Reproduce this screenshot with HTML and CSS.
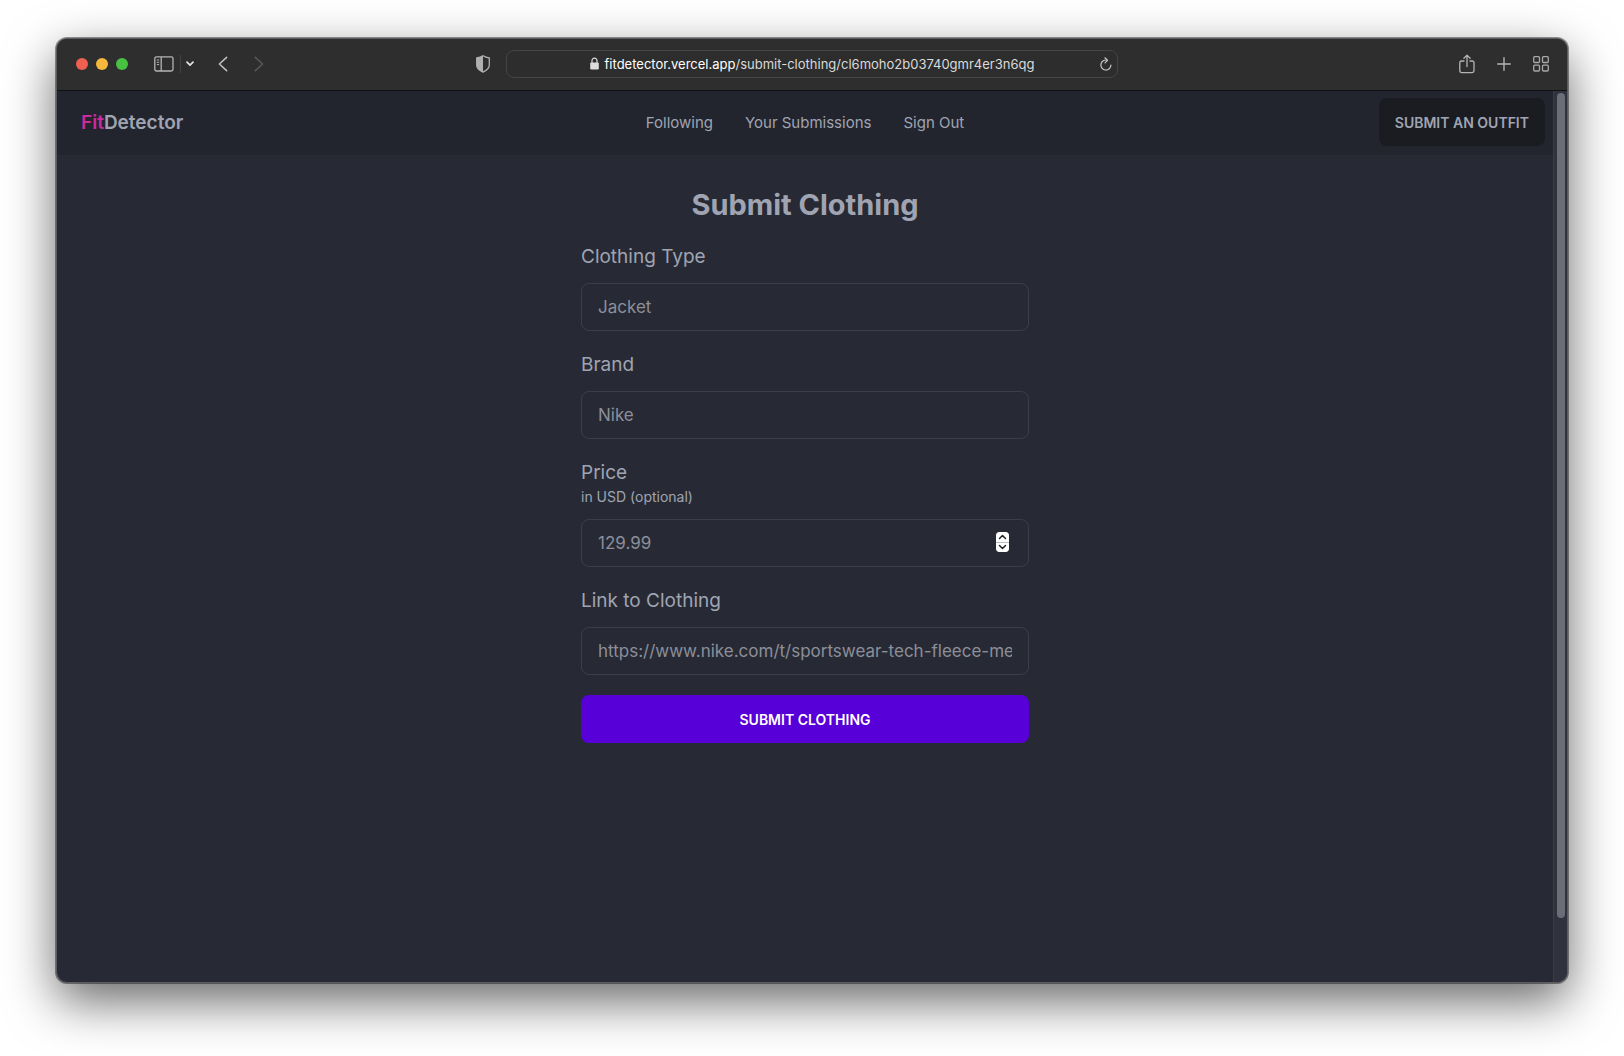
FILE: index.html
```html
<!DOCTYPE html>
<html lang="en">
<head>
<meta charset="utf-8">
<meta name="viewport" content="width=device-width, initial-scale=1">
<title>FitDetector</title>
<link rel="stylesheet" href="styles.css">
</head>
<body>
<div class="window">
  <header class="toolbar">
    <div class="toolbar-left">
      <div class="lights"><span class="light red"></span><span class="light yellow"></span><span class="light green"></span></div>
      <button class="tool sidebar" aria-label="Sidebar"><svg width="20" height="16" viewBox="0 0 20 16" fill="none" stroke="#b4b4b4" stroke-width="1.3"><rect x=".8" y=".8" width="18.2" height="14.2" rx="1.8"/><path d="M7.2 1v14"/><path d="M2.8 4h2.4M2.8 6.3h2.4M2.8 8.6h2.4" stroke-width="1"/></svg></button>
      <span class="divider"></span>
      <button class="tool chevron" aria-label="Tab groups"><svg width="8" height="6" viewBox="0 0 8 6" fill="none" stroke="#e2e2e2" stroke-width="1.7" stroke-linecap="round" stroke-linejoin="round"><path d="M1 1.2l3 3 3-3"/></svg></button>
      <button class="tool back" aria-label="Back"><svg width="10" height="16" viewBox="0 0 10 16" fill="none" stroke="#bdbdbd" stroke-width="1.6" stroke-linecap="round" stroke-linejoin="round"><path d="M8.6 1.3L1.4 8l7.2 6.7"/></svg></button>
      <button class="tool forward" aria-label="Forward"><svg width="10" height="16" viewBox="0 0 10 16" fill="none" stroke="#575757" stroke-width="1.6" stroke-linecap="round" stroke-linejoin="round"><path d="M1.4 1.3L8.6 8l-7.2 6.7"/></svg></button>
      <button class="tool shield" aria-label="Privacy report"><svg width="14" height="18" viewBox="0 0 14 18"><path d="M7 .8C5.200 2 3 2.700 .7 3v7.200c0 3 2.600 5 6.300 6.900 3.700-1.900 6.300-3.900 6.300-6.900V3C11 2.700 8.800 2 7 .8z" fill="none" stroke="#b0b0b0" stroke-width="1.300"/><path d="M7 .8C5.200 2 3 2.700 .7 3v7.200c0 3 2.600 5 6.300 6.900z" fill="#b0b0b0"/></svg></button>
    </div>
    <div class="address">
      <svg class="lock" width="9" height="13" viewBox="0 0 9 13"><rect x=".2" y="5.400" width="8.600" height="7" rx="1.200" fill="#dcdcdc"/><path d="M2 6V3.600a2.500 2.500 0 0 1 5 0V6" fill="none" stroke="#dcdcdc" stroke-width="1.200"/></svg>
      <span class="url"><span class="host">fitdetector.vercel.app</span>/submit-clothing/cl6moho2b03740gmr4er3n6qg</span>
      <button class="tool reload" aria-label="Reload"><svg width="12" height="14" viewBox="0 0 12 14" fill="none" stroke="#c4c4c4" stroke-width="1.200" stroke-linecap="round" stroke-linejoin="round"><path d="M7.200 3.200A5 5 0 1 0 10.900 8M4.900 .8l2.600 2.500-2.500 2.600"/></svg></button>
    </div>
    <div class="toolbar-right">
      <button class="tool" aria-label="Share"><svg width="16" height="20" viewBox="0 0 16 20" fill="none" stroke="#b4b4b4" stroke-width="1.300" stroke-linecap="round" stroke-linejoin="round"><path d="M5 7H2.600A1.800 1.800 0 0 0 .8 8.800v8a1.800 1.800 0 0 0 1.800 1.800h10.600a1.800 1.800 0 0 0 1.800-1.800v-8A1.800 1.800 0 0 0 13.200 7H11M8 12.500V1.200M4.900 4.200L8 1.100l3.100 3.100"/></svg></button>
      <button class="tool" aria-label="New tab"><svg width="14" height="14" viewBox="0 0 14 14" stroke="#b4b4b4" stroke-width="1.400" stroke-linecap="round"><path d="M7 .7v12.600M.7 7h12.600"/></svg></button>
      <button class="tool" aria-label="Tab overview"><svg width="16" height="16" viewBox="0 0 16 16" fill="none" stroke="#a8a8a8" stroke-width="1.300"><rect x=".7" y=".7" width="5.800" height="5.800" rx="1"/><rect x="9.500" y=".7" width="5.800" height="5.800" rx="1"/><rect x=".7" y="9.200" width="5.800" height="5.800" rx="1"/><rect x="9.500" y="9.200" width="5.800" height="5.800" rx="1"/></svg></button>
    </div>
  </header>
  <div class="viewport">
    <div class="page">
      <nav class="navbar">
        <a class="logo" href="#"><span class="accent">Fit</span>Detector</a>
        <div class="menu">
          <a href="#">Following</a>
          <a href="#">Your Submissions</a>
          <a href="#">Sign Out</a>
        </div>
        <div class="nav-end"><button class="btn btn-neutral">Submit an outfit</button></div>
      </nav>
      <main class="content">
        <h1>Submit Clothing</h1>
        <form class="form">
          <div class="field">
            <label for="type">Clothing Type</label>
            <input id="type" type="text" placeholder="Jacket">
          </div>
          <div class="field">
            <label for="brand">Brand</label>
            <input id="brand" type="text" placeholder="Nike">
          </div>
          <div class="field">
            <label for="price">Price<small>in USD (optional)</small></label>
            <div class="number">
              <input id="price" type="number" step="0.01" placeholder="129.99">
              <div class="stepper">
                <button type="button" aria-label="Increase"><svg width="9" height="6" viewBox="0 0 9 6"><path d="M1.500 4.500l3-3 3 3"/></svg></button>
                <button type="button" aria-label="Decrease"><svg width="9" height="6" viewBox="0 0 9 6"><path d="M1.500 1.500l3 3 3-3"/></svg></button>
              </div>
            </div>
          </div>
          <div class="field">
            <label for="link">Link to Clothing</label>
            <input id="link" type="url" placeholder="https://www.nike.com/t/sportswear-tech-fleece-mens-full-zip-hoodie">
          </div>
          <button class="btn btn-primary" type="submit">Submit Clothing</button>
        </form>
      </main>
    </div>
    <div class="scrollbar"><div class="thumb"></div></div>
  </div>
</div>
</body>
</html>
```
FILE: styles.css
```css
* {
  box-sizing: border-box;
}

body {
  margin: 0;
  min-height: 100vh;
  padding: 38px 56px 73px;
  display: flex;
  background: #fff;
  color: #a0a4b2;
  font-family: Inter, "Liberation Sans", sans-serif;
  font-size: 16px;
}

button {
  margin: 0;
  border: 0;
  font: inherit;
}

a {
  color: inherit;
  text-decoration: none;
}

svg {
  display: block;
}

.window {
  flex: 1;
  min-width: 0;
  display: flex;
  flex-direction: column;
  border: 1px solid #5c5d62;
  border-radius: 11px;
  overflow: hidden;
  background: #272a35;
  box-shadow: 0 0 0 1px rgba(0, 0, 0, 0.4), 0 18px 50px rgba(0, 0, 0, 0.6);
}

/* Browser toolbar */

.toolbar {
  display: grid;
  grid-template-columns: 1fr minmax(0, 612px) 1fr;
  align-items: center;
  height: 52px;
  padding-bottom: 2px;
  background: #2e2e2e;
  border-bottom: 1px solid #101113;
}

.toolbar-left,
.toolbar-right {
  display: flex;
  align-items: center;
}

.toolbar-left {
  padding: 0 16px 0 19px;
}

.toolbar-right {
  justify-content: flex-end;
  gap: 22px;
  padding-right: 18px;
}

.lights {
  display: flex;
  gap: 8px;
}

.light {
  width: 12px;
  height: 12px;
  border-radius: 50%;
}

.red {
  background: #f06050;
}

.yellow {
  background: #f5b83d;
}

.green {
  background: #48c143;
}

.tool {
  padding: 0;
  background: none;
}

.sidebar {
  margin-left: 26px;
}

.divider {
  width: 1px;
  height: 18px;
  margin: 0 5px 0 6px;
  background: #424242;
}

.back {
  margin-left: 24px;
}

.forward {
  margin-left: 26px;
}

.shield {
  margin-left: auto;
}

.address {
  position: relative;
  display: flex;
  align-items: center;
  justify-content: center;
  gap: 6px;
  height: 28px;
  border: 1px solid #464646;
  border-radius: 8px;
  background: #2d2d2d;
  color: #dadada;
  font-size: 13px;
  white-space: nowrap;
}

.host {
  color: #fff;
}

.reload {
  position: absolute;
  right: 5px;
}

/* Page area */

.viewport {
  flex: 1;
  display: flex;
}

.page {
  flex: 1;
  min-width: 0;
}

.scrollbar {
  width: 14px;
  padding: 2px 2px 2px 3px;
  border-left: 1px solid #3a3c48;
  background: #30323e;
}

.thumb {
  width: 8px;
  height: 93%;
  border-radius: 4px;
  background: #6b6d77;
}

.navbar {
  display: grid;
  grid-template-columns: 1fr auto 1fr;
  align-items: center;
  min-height: 64px;
  padding: 7px 8px 9px;
  background: #22252e;
}

.logo {
  padding-left: 16px;
  font-size: 19px;
  font-weight: 600;
}

.accent {
  color: #cb2b9f;
}

.menu {
  display: flex;
  gap: 32px;
  font-size: 15px;
}

.nav-end {
  display: flex;
  justify-content: flex-end;
}

.btn {
  height: 48px;
  padding: 0 16px;
  border-radius: 8px;
  font-size: 14px;
  font-weight: 600;
  text-transform: uppercase;
}

.btn-neutral {
  background: #1a1c21;
  color: #a0a4b2;
}

.btn-primary {
  background: #5800d8;
  color: #fff;
}

.content {
  display: flex;
  flex-direction: column;
  align-items: center;
  gap: 20px;
  padding: 32px 16px;
}

h1 {
  margin: 0;
  font-size: 29px;
  line-height: 36px;
  font-weight: 700;
}

.form {
  display: flex;
  flex-direction: column;
  gap: 20px;
  width: 100%;
  max-width: 448px;
}

.field {
  display: flex;
  flex-direction: column;
  gap: 12px;
}

label {
  font-size: 19px;
  line-height: 28px;
}

small {
  display: block;
  font-size: 14px;
  line-height: 20px;
}

input {
  width: 100%;
  height: 48px;
  padding: 0 16px;
  border: 1px solid #3b3e49;
  border-radius: 8px;
  background: transparent;
  color: #a0a4b2;
  font: inherit;
  font-size: 17px;
  appearance: textfield;
}

input::placeholder {
  color: #8c8f99;
  opacity: 1;
}

input::-webkit-inner-spin-button {
  display: none;
}

.number {
  position: relative;
}

.stepper {
  position: absolute;
  top: 13px;
  right: 20px;
  display: flex;
  flex-direction: column;
  gap: 1px;
  width: 13px;
  height: 20px;
  border-radius: 4px;
  overflow: hidden;
  background: #bdbdbd;
}

.stepper button {
  flex: 1;
  display: flex;
  align-items: center;
  justify-content: center;
  padding: 0;
  background: #fff;
}

.stepper path {
  fill: none;
  stroke: #222;
  stroke-width: 1.5;
  stroke-linecap: round;
  stroke-linejoin: round;
}
```
